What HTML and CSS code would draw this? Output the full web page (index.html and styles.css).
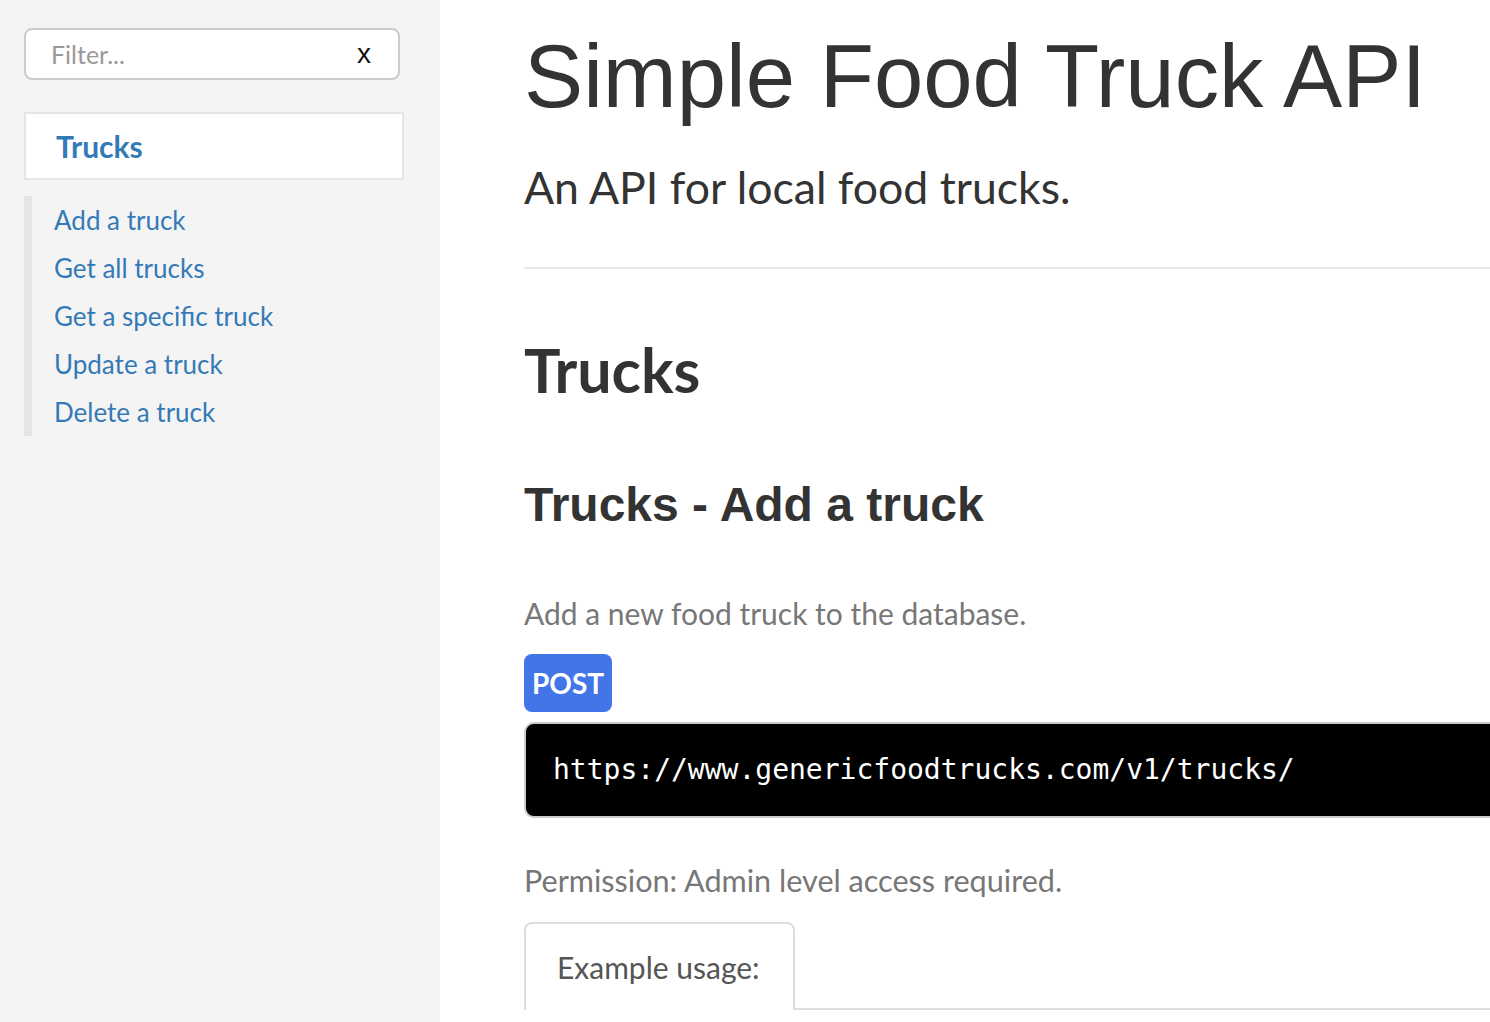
FILE: index.html
```html
<!DOCTYPE html>
<html lang="en">
<head>
<meta charset="utf-8">
<title>Simple Food Truck API</title>
<link rel="stylesheet" href="styles.css">
</head>
<body>
<div class="page">
  <aside class="sidebar">
    <div class="filter">
      <input class="filter-input" type="text" placeholder="Filter...">
      <button class="filter-clear" type="button">x</button>
    </div>
    <div class="group-title"><a href="#">Trucks</a></div>
    <ul class="nav-list">
      <li><a href="#">Add a truck</a></li>
      <li><a href="#">Get all trucks</a></li>
      <li><a href="#">Get a specific truck</a></li>
      <li><a href="#">Update a truck</a></li>
      <li><a href="#">Delete a truck</a></li>
    </ul>
  </aside>
  <main class="content">
    <h1 class="title">Simple Food Truck API</h1>
    <p class="subtitle">An API for local food trucks.</p>
    <hr class="divider">
    <h2 class="group-heading">Trucks</h2>
    <h3 class="endpoint-heading">Trucks - Add a truck</h3>
    <p class="desc">Add a new food truck to the database.</p>
    <span class="method">POST</span>
    <pre class="url">https://www.genericfoodtrucks.com/v1/trucks/</pre>
    <p class="desc permission">Permission: Admin level access required.</p>
    <div class="tabs">
      <div class="tab">Example usage:</div>
    </div>
  </main>
</div>
</body>
</html>
```
FILE: styles.css
```css
html, body {
  margin: 0;
  padding: 0;
  height: 100%;
  overflow: hidden;
  background: #fff;
}
body {
  font-family: Lato, "Noto Sans", sans-serif;
  color: #333;
}
.page {
  display: flex;
  height: 100vh;
}
.sidebar {
  flex: 0 0 440px;
  background: #f4f4f4;
  padding: 28px 0 0 24px;
  box-sizing: border-box;
}
.filter {
  display: flex;
  align-items: center;
  width: 376px;
  height: 52px;
  box-sizing: border-box;
  border: 2px solid #cccccc;
  border-radius: 8px;
  background: #fff;
}
.filter-input {
  flex: 1;
  min-width: 0;
  border: 0;
  outline: none;
  background: transparent;
  padding: 0 0 0 25px;
  font-family: Lato, "Noto Sans", sans-serif;
  font-size: 25px;
  color: #555;
}
.filter-input::placeholder {
  color: #999;
}
.filter-clear {
  border: 0;
  background: #fff;
  font-family: "Liberation Sans", Arial, sans-serif;
  font-size: 28px;
  color: #111;
  padding: 0;
  width: 40px;
  margin-right: 14px;
  line-height: 1;
}
.group-title {
  margin-top: 32px;
  width: 380px;
  height: 68px;
  box-sizing: border-box;
  border: 2px solid #e5e5e5;
  background: #fff;
  display: flex;
  align-items: center;
  padding-left: 30px;
}
.group-title a {
  color: #337ab7;
  text-decoration: none;
  font-weight: 700;
  font-size: 30px;
}
.nav-list {
  list-style: none;
  margin: 16px 0 0 0;
  padding: 0 0 0 22px;
  border-left: 8px solid #e5e5e5;
}
.nav-list li {
  line-height: 48px;
  height: 48px;
}
.nav-list a {
  color: #337ab7;
  text-decoration: none;
  font-size: 26px;
}
.content {
  flex: 0 0 1200px;
  padding-left: 84px;
  box-sizing: border-box;
}
.title {
  font-family: "Liberation Sans", Arial, Helvetica, sans-serif;
  font-weight: 400;
  font-size: 88.7px;
  line-height: 88px;
  margin: 33px 0 0 0;
  color: #333;
}
.subtitle {
  font-size: 44.6px;
  line-height: 60px;
  margin: 36px 0 0 0;
  color: #333;
}
.divider {
  border: 0;
  border-top: 2px solid #e8e8e8;
  margin: 50px 0 0 0;
  height: 0;
}
.group-heading {
  font-size: 61px;
  font-weight: 700;
  line-height: 80px;
  margin: 61px 0 0 0;
  color: #333;
}
.endpoint-heading {
  font-family: "Liberation Sans", Arial, Helvetica, sans-serif;
  font-size: 48px;
  font-weight: 700;
  line-height: 60px;
  margin: 65px 0 0 0;
  color: #333;
}
.desc {
  font-size: 30px;
  line-height: 40px;
  color: #777;
  margin: 58px 0 0 0;
}
.method {
  display: inline-flex;
  align-items: center;
  justify-content: center;
  margin-top: 21px;
  width: 88px;
  height: 58px;
  box-sizing: border-box;
  border-radius: 8px;
  background: #4275e8;
  color: #fff;
  font-weight: 700;
  font-size: 28px;
}
.url {
  margin: 10px 0 0 0;
  height: 96px;
  box-sizing: border-box;
  border: 2px solid #cccccc;
  border-radius: 10px;
  background: #000;
  color: #fff;
  font-family: "DejaVu Sans Mono", "Liberation Mono", monospace;
  font-size: 28px;
  line-height: 92px;
  padding: 0 0 0 27px;
}
.permission {
  margin-top: 43px;
  font-size: 30.6px;
}
.tabs {
  margin-top: 21px;
  display: flex;
  border-bottom: 2px solid #dddddd;
}
.tab {
  width: 271px;
  height: 88px;
  box-sizing: border-box;
  border: 2px solid #dddddd;
  border-bottom: 0;
  border-radius: 8px 8px 0 0;
  display: flex;
  align-items: center;
  padding-left: 31px;
  font-size: 30px;
  color: #555;
  margin-bottom: -2px;
  background: #fff;
}
```
